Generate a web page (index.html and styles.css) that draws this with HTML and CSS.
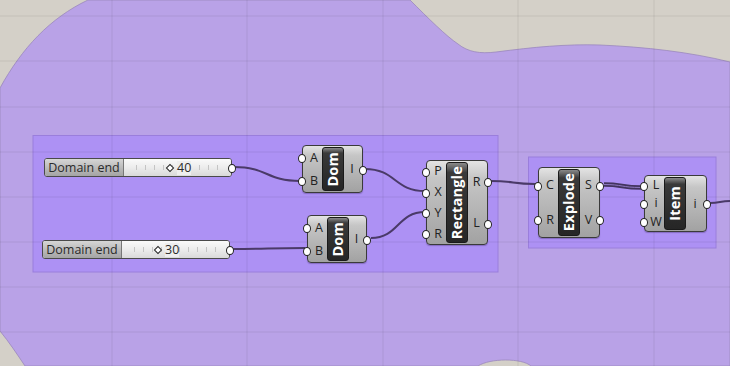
FILE: index.html
```html
<!DOCTYPE html>
<html lang="en">

<head>
  <meta charset="utf-8">
  <title>Grasshopper canvas</title>
  <link rel="stylesheet" href="styles.css">
</head>

<body>
  <div class="canvas">
    <svg class="backdrop" width="730" height="366" viewBox="0 0 730 366">
      <rect width="730" height="366" fill="#d4d0c8" />
      <!-- scribble blob -->
      <path class="blob" d="M0,88 C22,48 50,18 88,0 L410,0 C428,18 446,36 458,44 C468,52 480,54 496,52 C535,47 565,44 600,45 C645,47 690,52 730,62 L730,366 L531,366 C522,358 490,358 478,366 L25,366 C17,354 9,342 0,331 Z" />
      <!-- groups -->
      <rect class="group" x="33" y="135.5" width="465" height="136.5" />
      <rect class="group" x="528.5" y="157" width="187.5" height="91" />
      <!-- grid -->
      <g class="grid">
        <line x1="112" y1="0" x2="112" y2="366" />
        <line x1="247" y1="0" x2="247" y2="366" />
        <line x1="383" y1="0" x2="383" y2="366" />
        <line x1="518" y1="0" x2="518" y2="366" />
        <line x1="654" y1="0" x2="654" y2="366" />
        <line x1="0" y1="16" x2="730" y2="16" />
        <line x1="0" y1="61" x2="730" y2="61" />
        <line x1="0" y1="107" x2="730" y2="107" />
        <line x1="0" y1="152" x2="730" y2="152" />
        <line x1="0" y1="197" x2="730" y2="197" />
        <line x1="0" y1="242" x2="730" y2="242" />
        <line x1="0" y1="287" x2="730" y2="287" />
        <line x1="0" y1="332" x2="730" y2="332" />
      </g>
      <!-- wires -->
      <g class="wires">
        <path d="M234,167 C268,167 266,181 300,181" />
        <path d="M232,249 C268,249 268,248 305,248" />
        <path d="M365,169 C396,169 394,191 425,191" />
        <path d="M371,238 C399,238 397,212 425,212" />
        <path d="M491,181 C514,181 512,184 535,184" />
        <path d="M710,203 C720,203 720,201 730,201" />
      </g>
      <path class="wire-list" d="M604,184.5 C622,184.5 622,187.5 641,187.5" />
      <path class="wire-list-gap" d="M604,184.5 C622,184.5 622,187.5 641,187.5" />
    </svg>

    <div class="slider slider-a">
      <div class="slider-name">Domain end</div>
      <div class="slider-rail">
        <span class="knob"></span><span class="slider-value">40</span>
      </div>
    </div>

    <div class="slider slider-b">
      <div class="slider-name">Domain end</div>
      <div class="slider-rail">
        <span class="knob"></span><span class="slider-value">30</span>
      </div>
    </div>

    <div class="comp dom-a">
      <div class="ports in"><span class="port">A</span><span class="port">B</span></div>
      <div class="label"><span>Dom</span></div>
      <div class="ports out"><span class="port">I</span></div>
    </div>

    <div class="comp dom-b">
      <div class="ports in"><span class="port">A</span><span class="port">B</span></div>
      <div class="label"><span>Dom</span></div>
      <div class="ports out"><span class="port">I</span></div>
    </div>

    <div class="comp rect">
      <div class="ports in">
        <span class="port">P</span><span class="port">X</span><span class="port">Y</span><span class="port">R</span>
      </div>
      <div class="label"><span>Rectangle</span></div>
      <div class="ports out"><span class="port">R</span><span class="port">L</span></div>
    </div>

    <div class="comp explode">
      <div class="ports in"><span class="port">C</span><span class="port">R</span></div>
      <div class="label"><span>Explode</span></div>
      <div class="ports out"><span class="port">S</span><span class="port">V</span></div>
    </div>

    <div class="comp item">
      <div class="ports in"><span class="port">L</span><span class="port">i</span><span class="port">W</span></div>
      <div class="label"><span>Item</span></div>
      <div class="ports out"><span class="port">i</span></div>
    </div>
  </div>
</body>

</html>
```

FILE: styles.css
```css
* {
  margin: 0;
  padding: 0;
  box-sizing: border-box;
}

body {
  font-family: 'Open Sans', 'Liberation Sans', sans-serif;
  background-color: #d4d0c8;
  overflow: hidden;
  -webkit-font-smoothing: antialiased;
}

.canvas {
  position: relative;
  width: 730px;
  height: 366px;
  overflow: hidden;
}

.backdrop {
  position: absolute;
  left: 0;
  top: 0;
  display: block;
}

.blob {
  fill: #b9a2e7;
  stroke: #9a88bc;
  stroke-width: 0.8;
}

.group {
  fill: #ad91f4;
  stroke: #9a7edc;
  stroke-width: 1;
}

.grid line {
  stroke: #000;
  stroke-opacity: 0.07;
  stroke-width: 1;
}

.wires path {
  fill: none;
  stroke: #4a3a68;
  stroke-width: 2;
}

.wire-list {
  fill: none;
  stroke: #43345f;
  stroke-width: 4.5;
}

.wire-list-gap {
  fill: none;
  stroke: #8d78bf;
  stroke-width: 1;
}

/* number sliders */
.slider {
  position: absolute;
  display: flex;
  width: 188px;
  height: 19px;
  border: 1px solid #4a4a4a;
  border-radius: 3px;
  background: #e8e8e8;
}

.slider::after {
  content: '';
  position: absolute;
  right: -5px;
  top: 50%;
  width: 6px;
  height: 7px;
  margin-top: -4px;
  border: 1.5px solid #222;
  border-radius: 50%;
  background: #fff;
}

.slider-a {
  left: 44px;
  top: 158px;
}

.slider-b {
  left: 42px;
  top: 240px;
}

.slider-name {
  width: 79px;
  display: flex;
  align-items: center;
  justify-content: center;
  font-size: 12.5px;
  color: #2b2b2b;
  border-right: 1px solid #777;
  border-radius: 2px 0 0 2px;
  background: linear-gradient(#d6d6d6, #b9b9b9 55%, #a4a4a4);
}

.slider-rail {
  flex: 1;
  display: flex;
  align-items: center;
  gap: 4px;
  border-radius: 0 2px 2px 0;
  background:
    repeating-linear-gradient(90deg, #c4c4c4 0 1px, transparent 1px 9px) 12px 50% / calc(100% - 24px) 5px no-repeat,
    linear-gradient(#fafafa, #ececec 50%, #d9d9d9);
  font-size: 12.5px;
  color: #2b2b2b;
}

.slider-a .slider-rail {
  padding-left: 43px;
}

.slider-b .slider-rail {
  padding-left: 33px;
}

.slider-value {
  background: #eeeeee;
  line-height: 14px;
}

.knob {
  width: 6px;
  height: 6px;
  border: 1.5px solid #222;
  background: #fff;
  transform: rotate(45deg);
}

/* components */
.comp {
  position: absolute;
  display: flex;
  border: 1px solid #3a3a3a;
  border-radius: 4px;
  background: linear-gradient(#e4e4e4, #c6c6c6 20%, #b4b4b4 60%, #a2a2a2);
  box-shadow: 0 1px 1px rgba(60, 40, 100, 0.35);
}

.dom-a {
  left: 302px;
  top: 145px;
  width: 61px;
  height: 48px;
}

.dom-b {
  left: 307px;
  top: 215px;
  width: 60px;
  height: 48px;
}

.rect {
  left: 426px;
  top: 160px;
  width: 62px;
  height: 85px;
}

.explode {
  left: 538px;
  top: 167px;
  width: 62px;
  height: 71px;
}

.item {
  left: 644px;
  top: 175px;
  width: 63px;
  height: 57px;
}

.ports {
  display: flex;
  flex-direction: column;
  justify-content: space-around;
  width: 19px;
}

.ports.out {
  flex: 1;
}

.port {
  position: relative;
  font-size: 12.5px;
  line-height: 14px;
  color: #222;
  text-align: center;
}

.in .port {
  padding-left: 3px;
}

.out .port {
  padding-right: 2px;
}

.port::before {
  content: '';
  position: absolute;
  top: 50%;
  width: 6px;
  height: 7px;
  margin-top: -3.5px;
  border: 1.5px solid #222;
  border-radius: 50%;
  background: #fff;
}

.in .port::before {
  left: -5px;
}

.out .port::before {
  right: -5px;
}

.label {
  width: 22px;
  margin: 1px 0;
  display: flex;
  align-items: center;
  justify-content: center;
  border: 1px solid #1a1a1a;
  border-radius: 3px;
  background: linear-gradient(#8a8a8a, #3a3a3a 12%, #2c2c2c 70%, #262626);
}

.label span {
  writing-mode: vertical-rl;
  transform: rotate(180deg);
  color: #fff;
  font-weight: bold;
  font-size: 14.5px;
  line-height: 20px;
  letter-spacing: 0.2px;
}
```
